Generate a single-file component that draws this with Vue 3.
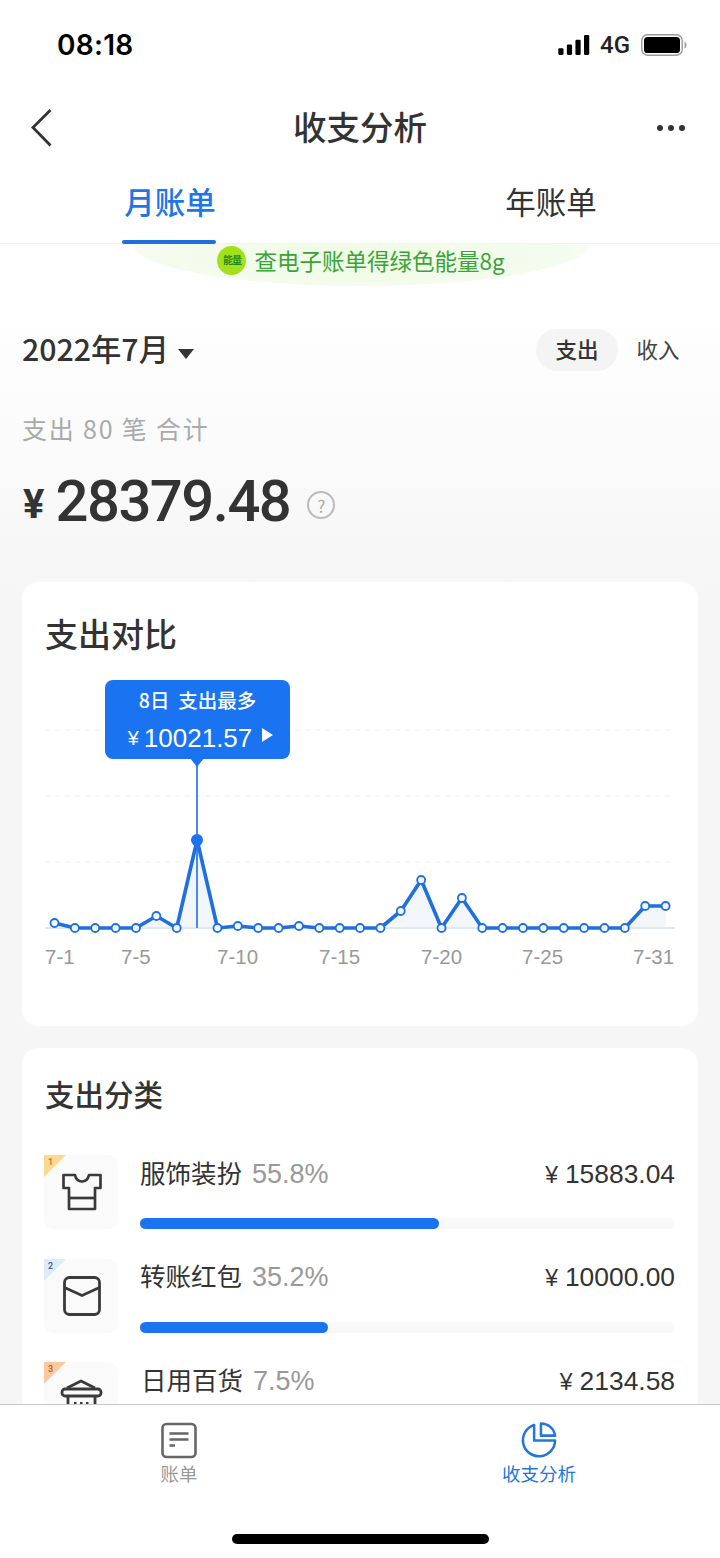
<script setup>
const ys = [923,928,928,928,928,916,928,840,928,926,928,928,926,928,928,928,928,911,880,928,898,928,928,928,928,928,928,928,928,906,906]
const points = ys.map((y, i) => ({ x: 54.5 + i * 20.37, y: y - 680, day: i + 1 }))
const line = points.map(p => `${p.x.toFixed(1)},${p.y}`).join(' ')
const area = `${points[0].x},248 ${line} ${points[30].x.toFixed(1)},248`
const ticks = [
  { t: '7-1', x: 45 }, { t: '7-5', x: 121 }, { t: '7-10', x: 217 }, { t: '7-15', x: 319 },
  { t: '7-20', x: 421 }, { t: '7-25', x: 522 }, { t: '7-31', x: 633 }
]
const cats = [
  { name: '服饰装扮', pct: '55.8%', amt: '15883.04', w: 55.8, rank: 1, rib: '#fbd98f', rc: '#b5762a', icon: 'shirt' },
  { name: '转账红包', pct: '35.2%', amt: '10000.00', w: 35.2, rank: 2, rib: '#deecf7', rc: '#2f5d8f', icon: 'wallet' },
  { name: '日用百货', pct: '7.5%', amt: '2134.58', w: 7.5, rank: 3, rib: '#fbc99f', rc: '#a8622a', icon: 'basket' }
]
</script>

<template>
  <div class="page">
    <main class="scroll">
      <header class="head">
        <div class="status">
          <span class="time">08:18</span>
          <div class="sys">
            <svg width="32" height="20" viewBox="0 0 33 21"><rect x="0" y="14" width="5.5" height="7" rx="1.2"/><rect x="9" y="10" width="5.5" height="11" rx="1.2"/><rect x="18" y="5" width="5.5" height="16" rx="1.2"/><rect x="27" y="0" width="5.5" height="21" rx="1.2"/></svg>
            <span class="net">4G</span>
            <svg width="46" height="22" viewBox="0 0 46 22"><rect x="0.8" y="0.8" width="40.4" height="20.4" rx="5.5" fill="none" stroke="#9a9a9a" stroke-width="1.4"/><rect x="3" y="3" width="36" height="16" rx="3.6" fill="#000"/><path d="M43.5 7.5c1.4.5 2 2 2 3.5s-.6 3-2 3.5z" fill="#a0a0a0"/></svg>
          </div>
        </div>
        <nav class="nav">
          <svg class="back" width="24" height="40" viewBox="0 0 24 40"><path d="M20.5 2 3 19.5 20.5 37.5" fill="none" stroke="#333" stroke-width="2.8"/></svg>
          <h1>收支分析</h1>
          <div class="dots"><i></i><i></i><i></i></div>
        </nav>
        <div class="tabs">
          <div class="tab on">月账单<span class="bar"></span></div>
          <div class="tab">年账单</div>
        </div>
      </header>

      <div class="hero">
        <div class="banner">
          <span class="leaf">能量</span>
          <span>查电子账单得绿色能量8g</span>
        </div>
        <div class="daterow">
          <div class="date"><span class="dtext">2022年7月</span><span class="caret"></span></div>
          <div class="seg"><span class="chip"><b>支出</b></span><span class="plain">收入</span></div>
        </div>
        <div class="sub">支出 80 笔 合计</div>
        <div class="total">
          <span class="yen">¥</span><span class="num">28379.48</span>
          <span class="help">?</span>
        </div>
      </div>

      <section class="card chart">
        <h2 class="t1">支出对比</h2>
        <div class="plot">
          <svg width="676" height="290" viewBox="0 0 676 290" class="plotsvg">
            <defs>
              <linearGradient id="af" x1="0" y1="0" x2="0" y2="1"><stop offset="0" stop-color="#edf4fb"/><stop offset="1" stop-color="#f3f7fb"/></linearGradient>
            </defs>
            <g transform="translate(-22 0)">
              <line v-for="y in [50,116,182]" :key="y" x1="45" x2="675" :y1="y" :y2="y" stroke="#eeeeee" stroke-dasharray="5 5" stroke-width="1"/>
              <polygon :points="area" fill="url(#af)"/>
              <line x1="45" x2="675" y1="248" y2="248" stroke="#e1e8f1" stroke-width="2"/>
              <line x1="197" x2="197" y1="79" y2="248" stroke="#1f6fe6" stroke-width="1.6"/>
              <polyline :points="line" fill="none" stroke="#1f6fe0" stroke-width="3.6" stroke-linejoin="round"/>
              <template v-for="p in points" :key="p.day">
                <circle v-if="p.day !== 8" :cx="p.x" :cy="p.y" r="4" fill="#f2f9ff" stroke="#1f6fe0" stroke-width="1.8"/>
              </template>
              <circle cx="197" cy="160" r="6" fill="#1a73f0"/>
              <text v-for="t in ticks" :key="t.t" :x="t.x" y="284" class="tick">{{ t.t }}</text>
            </g>
          </svg>
          <div class="tip">
            <div class="tip1">8日&nbsp;&nbsp;支出最多</div>
            <div class="tip2"><span class="ty">¥</span>10021.57<span class="tarrow"></span></div>
            <span class="tpoint"></span>
          </div>
        </div>
      </section>

      <section class="card cats">
        <h2 class="t2">支出分类</h2>
        <div v-for="c in cats" :key="c.rank" class="row">
          <div class="ico">
            <span class="ribbon" :style="{ borderTopColor: c.rib }"></span>
            <span class="rank" :style="{ color: c.rc }">{{ c.rank }}</span>
            <svg v-if="c.icon === 'shirt'" width="40" height="38" viewBox="0 0 40 38" fill="none" stroke="#3a3a3a" stroke-width="2.7" stroke-linejoin="round"><path d="M13 2 1.500 2v13H7v21h26V15h5.500V2H27c-1 4.500-4 6.500-7 6.500S14 6.500 13 2Z"/><path d="M7 25h26"/></svg>
            <svg v-else-if="c.icon === 'wallet'" width="38" height="40" viewBox="0 0 38 40" fill="none" stroke="#3a3a3a" stroke-width="2.800"><rect x="1.500" y="1.500" width="35" height="37" rx="5"/><path d="M1.500 11.500 19 19.500l17.500-8"/></svg>
            <svg v-else width="44" height="44" viewBox="0 0 44 44" fill="none" stroke="#3a3a3a" stroke-width="2.800" stroke-linejoin="round"><path d="M7 9 21 2l14 7"/><rect x="2" y="10" width="39" height="7" rx="3"/><path d="M8 17v25h27V17"/><path d="M14 24.500h2.500M20 24.500h2.500M26 24.500h2.500"/></svg>
          </div>
          <div class="info">
            <div class="line1">
              <div class="nm"><span class="name">{{ c.name }}</span><span class="pct">{{ c.pct }}</span></div>
              <div class="amt"><span class="ay">¥</span>{{ c.amt }}</div>
            </div>
            <div class="track"><div class="fill" :style="{ width: c.w + '%' }"></div></div>
          </div>
        </div>
      </section>
    </main>

    <footer class="tabbar">
      <div class="items">
        <div class="item">
          <svg width="36" height="36" viewBox="0 0 36 36" fill="none" stroke="#666"><rect x="1.500" y="1.500" width="33" height="33" rx="4" stroke-width="2.600"/><path d="M8.500 11h19M8.500 17h19M8.500 23h5.500" stroke-width="2.400"/></svg>
          <span>账单</span>
        </div>
        <div class="item act">
          <svg width="38" height="38" viewBox="0 0 38 38" fill="none" stroke="#2476dc" stroke-width="2.600"><path d="M14 3A16.500 16.500 0 1 0 35.500 19H14Z" stroke-linejoin="round"/><path d="M21 1.500V14h14.500A14.500 14.500 0 0 0 21 1.500Z" stroke-linejoin="round"/></svg>
          <span>收支分析</span>
        </div>
      </div>
      <div class="home"></div>
    </footer>
  </div>
</template>

<style>
html, body { margin: 0; background: #fff; }
</style>

<style scoped>
.page {
  width: 720px; height: 1558px; display: flex; flex-direction: column; overflow: hidden;
  font-family: "Noto Sans CJK SC", "Noto Sans", sans-serif; color: #333; background: #f6f6f6;
}
.scroll { flex: 1; min-height: 0; overflow: hidden; }
.head { background: #fff; }
.status { height: 90px; display: flex; align-items: center; justify-content: space-between; padding: 0 33px 0 57px; box-sizing: border-box; color: #000; }
.time { font: 600 28px "Inter", sans-serif; letter-spacing: 0.3px; }
.sys { display: flex; align-items: center; gap: 9px; }
.net { font: 500 24px "Roboto", sans-serif; color: #222; margin-right: 2px; margin-left: 1px; }
.nav { height: 75px; display: flex; align-items: center; justify-content: space-between; padding: 0 35px 0 30px; }
.nav h1 { margin: -4px 0 0; font-size: 33.500px; font-weight: 500; color: #333; line-height: 1; position: absolute; left: 0; width: 720px; text-align: center; pointer-events: none; }
.dots { display: flex; gap: 5px; }
.dots i { width: 6px; height: 6px; border-radius: 50%; background: #333; }
.tabs { height: 79px; display: grid; grid-template-columns: 340px 1fr; border-bottom: 1px solid #f2f2f2; box-sizing: border-box; }
.tab { position: relative; display: flex; justify-content: center; padding-top: 13px; font-size: 30.500px; line-height: 46px; color: #333; }
.tabs .tab:last-child { padding-left: 42px; }
.tab.on { color: #1f76e6; font-weight: 500; }
.bar { position: absolute; left: 122px; width: 94px; height: 4px; bottom: -1px; border-radius: 2px; background: #1f6fe0; }
.hero { background: linear-gradient(#fff 0, #fff 60px, #f6f6f6 338px); height: 338px; padding: 0 22px; box-sizing: border-box; }
.banner {
  width: 456px; height: 42px; margin: 0 auto; position: relative; left: 1px; display: flex; align-items: center; justify-content: center; gap: 8px;
  border-radius: 0 0 50% 50% / 0 0 100% 100%; background: radial-gradient(ellipse 60% 100% at 50% 30%, #eefbe2 0, #f4fcee 70%, #f9fdf5 100%); color: #3aa33a; font-size: 22.500px; line-height: 1; padding-bottom: 10px; box-sizing: border-box;
}
.leaf { width: 29px; height: 29px; border-radius: 50%; background: #a4e01a; color: #1f8a1f; font-size: 10px; font-weight: 700; display: flex; align-items: center; justify-content: center; letter-spacing: -1px; }
.daterow { margin-top: 43px; height: 42px; display: flex; align-items: center; justify-content: space-between; }
.date { display: flex; align-items: center; font-size: 30.300px; font-weight: 500; color: #333; }
.dtext { position: relative; top: -2px; }
.caret { margin-left: 9px; margin-top: 7px; border: 8.500px solid transparent; border-top: 10px solid #333; border-bottom: 0; }
.seg { display: flex; align-items: center; font-size: 21.500px; }
.chip { background: #f4f4f4; border-radius: 21px; height: 42px; width: 82px; display: flex; align-items: center; justify-content: center; padding-bottom: 4px; box-sizing: border-box; }
.chip b { font-weight: 500; }
.plain { width: 80px; text-align: center; color: #444; padding-bottom: 4px; }
.sub { margin-top: 39px; font-size: 25px; line-height: 36px; color: #aaa; letter-spacing: 1.800px; }
.total { display: flex; align-items: center; margin-top: 19px; height: 72px; }
.yen { font: 700 40px "Roboto", sans-serif; margin-left: 1px; margin-right: 11px; margin-top: 7px; }
.num { font: 500 58px "Roboto", sans-serif; color: #333; letter-spacing: -1.500px; }
.help { margin-left: 17px; margin-top: 8px; width: 24px; height: 24px; border: 2.500px solid #bbb; border-radius: 50%; color: #aaa; font-size: 17px; display: flex; align-items: center; justify-content: center; line-height: 1; }
.card { margin: 0 22px; background: #fff; border-radius: 16px; }
.chart { height: 444px; position: relative; }
.t1 { margin: 0; padding: 30px 0 0 23px; font-size: 33px; line-height: 42px; height: 98px; box-sizing: border-box; font-weight: 500; color: #333; }
.plot { position: relative; height: 290px; }
.plotsvg { display: block; }
.tick { font: 400 20.500px "Liberation Sans", sans-serif; fill: #999; }
.tip { position: absolute; left: 83px; top: 0; width: 185px; height: 79px; border-radius: 8px; background: #1a73f0; color: #fff; text-align: center; }
.tip1 { font-size: 19.500px; line-height: 24px; padding-top: 8px; font-weight: 500; }
.tip2 { font: 400 26px/36px "Liberation Sans", sans-serif; padding: 8px 0 0 6px; display: flex; justify-content: center; align-items: center; }
.ty { font-size: 20px; margin-right: 5px; }
.tarrow { margin-left: 10px; margin-top: -6px; border: 7px solid transparent; border-left: 11px solid #fff; border-right: 0; }
.tpoint { position: absolute; left: 85px; bottom: -8px; width: 0; height: 0; border: 7px solid transparent; border-top: 9px solid #1a73f0; border-bottom: 0; }
.cats { margin-top: 22px; height: 420px; padding: 0 23px; }
.t2 { margin: 0; padding-top: 25px; height: 107px; box-sizing: border-box; font-size: 29.500px; line-height: 40px; font-weight: 500; color: #333; }
.row { display: flex; height: 103.500px; gap: 22px; margin-left: -1px; }
.ico { position: relative; width: 74px; height: 74px; border-radius: 10px; background: #fafafa; display: flex; align-items: center; justify-content: center; flex: none; box-sizing: border-box; }
.ico > svg { position: relative; left: 1px; }
.row:last-child .ico > svg { position: absolute; left: 16px; top: 17px; }
.ribbon { position: absolute; left: 0; top: 0; width: 0; height: 0; border-top: 22px solid #fbd98f; border-right: 22px solid transparent; }
.rank { position: absolute; left: 4px; top: 1px; font: 500 9px/12px "Roboto", sans-serif; }
.info { flex: 1; min-width: 0; }
.line1 { display: flex; justify-content: space-between; align-items: center; height: 38px; }
.nm { display: flex; align-items: center; gap: 10px; }
.name { font-size: 25.500px; color: #333; margin-bottom: 6px; }
.row:last-child .name { margin-left: 1px; }
.pct { font: 400 27px "Liberation Sans", sans-serif; color: #999; }
.amt { font: 400 26.400px "Liberation Sans", sans-serif; color: #333; }
.ay { font-size: 23px; margin-right: 7px; }
.track { margin-top: 25px; height: 11px; border-radius: 6px; background: #f9f9f9; }
.fill { height: 100%; border-radius: 6px; background: #1a73f0; }
.tabbar { height: 154px; flex: none; background: #fff; border-top: 1px solid #c8c8c8; box-sizing: border-box; position: relative; }
.items { display: grid; grid-template-columns: 1fr 1fr; padding: 17px 0 0 0; }
.item { display: flex; flex-direction: column; align-items: center; font-size: 18.500px; line-height: 24px; color: #999; gap: 2px; position: relative; left: -1px; }
.item svg { display: block; height: 37px; }
.act { color: #2476dc; }
.home { position: absolute; left: 232px; top: 129px; width: 257px; height: 10px; border-radius: 5px; background: #000; }
</style>
